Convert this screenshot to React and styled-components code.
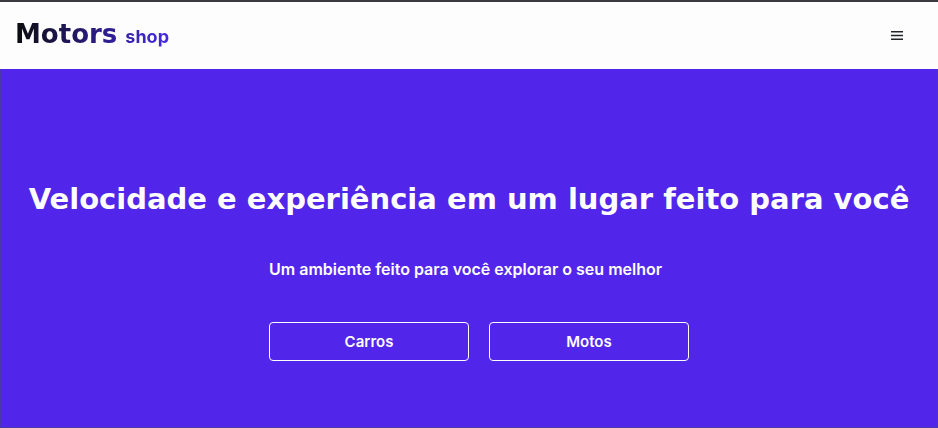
import React from "react";
import styled, { createGlobalStyle } from "styled-components";

const GlobalStyle = createGlobalStyle`
  *, *::before, *::after { box-sizing: border-box; }
  body { margin: 0; background: #5126ea; font-family: Inter, sans-serif; }
`;

const Page = styled.div`
  min-height: 100vh;
  display: flex;
  flex-direction: column;
  border-top: 2px solid #3b3a3e;
`;

const Header = styled.header`
  display: flex;
  align-items: center;
  justify-content: space-between;
  height: 67px;
  padding: 0 35px 0 15px;
  background: #fdfdfd;
`;

const Logo = styled.a`
  display: flex;
  align-items: baseline;
  gap: 8px;
  font-family: "DejaVu Sans", sans-serif;
  font-weight: 700;
  font-size: 26px;
  line-height: 36px;
  text-decoration: none;
  color: transparent;
  background: linear-gradient(90deg, #0b0d0d, #4529e6);
  background-clip: text;
`;

const LogoSmall = styled.span`
  font-family: Inter, sans-serif;
  font-size: 18px;
`;

const MenuButton = styled.button`
  display: flex;
  padding: 0;
  border: 0;
  background: none;
  color: #212529;
`;

const Hero = styled.main`
  flex: 1;
  display: flex;
  flex-direction: column;
  align-items: center;
  padding: 110px 16px 64px;
  border: 1px solid #4a3aa8;
  border-top: 0;
  background: #5126ea;
  color: #fdfdfd;
`;

const Title = styled.h1`
  margin: 0;
  font-family: "DejaVu Sans", sans-serif;
  font-size: 29px;
  line-height: 40px;
  font-weight: 700;
  text-align: center;
`;

const Content = styled.div`
  display: flex;
  flex-direction: column;
  width: 100%;
  max-width: 440px;
  margin-top: 38px;
  padding-left: 20px;
`;

const Subtitle = styled.p`
  margin: 0 0 41px;
  font-size: 16px;
  line-height: 24px;
  font-weight: 600;
`;

const Actions = styled.div`
  display: grid;
  grid-template-columns: 1fr 1fr;
  gap: 20px;
`;

const ActionButton = styled.button`
  height: 39px;
  border: 1px solid #fdfdfd;
  border-radius: 4px;
  background: transparent;
  color: #fdfdfd;
  font: 600 15px/20px Inter, sans-serif;
`;

export default function App() {
  return (
    <>
      <GlobalStyle />
      <Page>
        <Header>
          <Logo href="#">Motors <LogoSmall>shop</LogoSmall></Logo>
          <MenuButton type="button" aria-label="Menu">
            <svg width="12" height="9" viewBox="0 0 12 9" fill="currentColor" aria-hidden="true">
              <path d="M0 0h12v1.4H0zM0 3.8h12v1.4H0zM0 7.6h12V9H0z" />
            </svg>
          </MenuButton>
        </Header>
        <Hero>
          <Title>Velocidade e experiência em um lugar feito para você</Title>
          <Content>
            <Subtitle>Um ambiente feito para você explorar o seu melhor</Subtitle>
            <Actions>
              <ActionButton type="button">Carros</ActionButton>
              <ActionButton type="button">Motos</ActionButton>
            </Actions>
          </Content>
        </Hero>
      </Page>
    </>
  );
}
